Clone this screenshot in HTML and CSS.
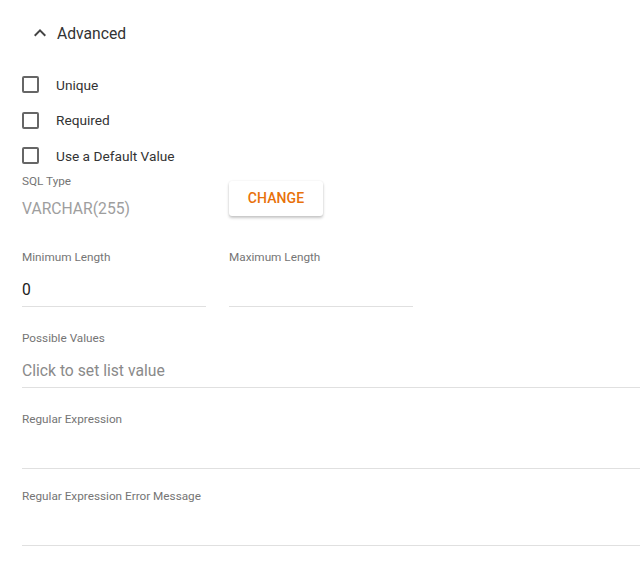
FILE: index.html
```html
<!DOCTYPE html>
<html>
<head>
<meta charset="utf-8">
<link rel="stylesheet" href="styles.css">
</head>
<body>
<div class="panel">
  <div class="section-head">
    <svg class="chev" width="24" height="24" viewBox="0 0 24 24"><path d="M7.41 15.41L12 10.83l4.59 4.58L18 14l-6-6-6 6z" fill="#444"/></svg>
    <span class="section-title">Advanced</span>
  </div>
  <div class="checks">
    <label class="check"><span class="box"></span><span class="check-label">Unique</span></label>
    <label class="check"><span class="box"></span><span class="check-label">Required</span></label>
    <label class="check"><span class="box"></span><span class="check-label">Use a Default Value</span></label>
  </div>
  <div class="sql-row">
    <div class="sql-field">
      <div class="label">SQL Type</div>
      <div class="sql-value">VARCHAR(255)</div>
    </div>
    <button class="btn">CHANGE</button>
  </div>
  <div class="len-row">
    <div class="field short">
      <div class="label">Minimum Length</div>
      <div class="value">0</div>
    </div>
    <div class="field short">
      <div class="label">Maximum Length</div>
      <div class="value"></div>
    </div>
  </div>
  <div class="field wide">
    <div class="label">Possible Values</div>
    <div class="value placeholder">Click to set list value</div>
  </div>
  <div class="field wide">
    <div class="label">Regular Expression</div>
    <div class="value"></div>
  </div>
  <div class="field wide tight">
    <div class="label">Regular Expression Error Message</div>
    <div class="value"></div>
  </div>
</div>
</body>
</html>
```
FILE: styles.css
```css
html, body {
  margin: 0;
  padding: 0;
  background: #fff;
  font-family: Roboto, "Liberation Sans", sans-serif;
  overflow: hidden;
}
.panel {
  padding: 0 0 0 22px;
  width: 618px;
}
.section-head {
  display: flex;
  align-items: center;
  height: 24px;
  margin-top: 21px;
  padding-left: 6px;
}
.chev {
  width: 24px;
  height: 24px;
}
.section-title {
  margin-left: 5px;
  font-size: 15.7px;
  color: #333;
}
.checks {
  margin-top: 22px;
  display: flex;
  flex-direction: column;
}
.check {
  display: flex;
  align-items: center;
  height: 35.5px;
}
.box {
  width: 13px;
  height: 13px;
  border: 2px solid #666;
  border-radius: 2px;
}
.check-label {
  margin-left: 17px;
  font-size: 13.7px;
  color: #333;
}
.sql-row {
  display: flex;
  align-items: flex-start;
  margin-top: -1px;
}
.sql-field {
  width: 207px;
}
.label {
  font-size: 11.75px;
  color: #757575;
  line-height: 16px;
}
.sql-value {
  margin-top: 10px;
  font-size: 15.7px;
  color: #9e9e9e;
  line-height: 19px;
}
.btn {
  margin-top: 8px;
  width: 94px;
  height: 35px;
  border: none;
  border-radius: 3px;
  background: #fff;
  box-shadow: 0 2px 3px rgba(0,0,0,0.22), 0 0 2px rgba(0,0,0,0.08);
  font-family: Roboto, "Liberation Sans", sans-serif;
  font-weight: 500;
  font-size: 14px;
  color: #e8710a;
  letter-spacing: 0.1px;
  padding: 0;
}
.len-row {
  display: flex;
  gap: 23px;
  margin-top: 31px;
}
.field {
  display: flex;
  flex-direction: column;
}
.field.short {
  width: 184px;
}
.field.wide {
  width: 618px;
  margin-top: 23px;
}
.field.wide.tight {
  margin-top: 19px;
}
.value {
  margin-top: 15px;
  height: 26px;
  font-size: 15.7px;
  line-height: 19px;
  color: #212121;
  border-bottom: 1px solid #e0e0e0;
}
.placeholder {
  color: #8a8a8a;
}
```
